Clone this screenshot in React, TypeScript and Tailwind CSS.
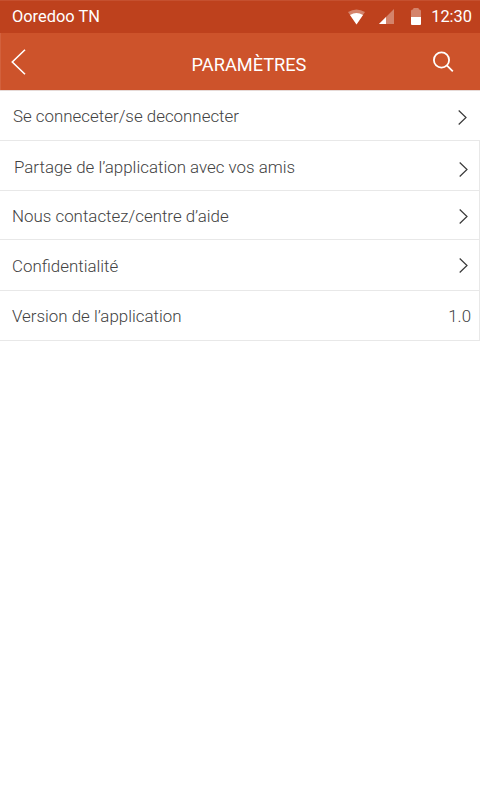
const rows = [
  { label: "Se conneceter/se deconnecter", box: "h-[50px] pl-[13px] pr-[13px]", text: "pt-[3px]", icon: "mt-[3px]" },
  { label: "Partage de l’application avec vos amis", box: "h-[50px] pl-[14px] pr-[11px] border-r", text: "pt-[5px]", icon: "mt-[7px]" },
  { label: "Nous contactez/centre d’aide", box: "h-[49px] pl-3 pr-[11px] border-r", text: "pt-[3px]", icon: "mt-[2px]" },
  { label: "Confidentialité", box: "h-[51px] pl-3 pr-[11px] border-r", text: "pt-[3px]", icon: "" },
  { label: "Version de l’application", value: "1.0", box: "h-[50px] pl-3 pr-2 border-r", text: "pt-[3px]", icon: "" },
];

export default function App() {
  return (
    <main className="flex h-[800px] w-[480px] flex-col bg-white font-['Roboto',sans-serif]">
      <div className="flex h-[33px] items-center justify-between border-t border-[#c5502f] bg-[#be411d] pr-2 pl-3 text-[16.4px] text-white">
        <span>Ooredoo TN</span>
        <div className="flex items-center">
          <svg className="mr-[14px]" width="17" height="16" viewBox="0 0 17 16">
            <path d="M0 3Q8.500 -2 17 3L8.500 15.500Z" fill="white" opacity=".35" />
            <path d="M2 6Q8.500 2 15 6L8.500 15.500Z" fill="white" />
          </svg>
          <svg className="mr-[17px]" width="15" height="15">
            <path d="M0 15L15 0V15Z" fill="white" opacity=".35" />
            <path d="M0 15L7 8V15Z" fill="white" />
          </svg>
          <svg className="mr-[10.500px]" width="10" height="17" viewBox="0 0 10 17">
            <path d="M0 9V3Q0 1.500 1.500 1.500H2Q2 0 3 0H7Q8 0 8 1.500H8.500Q10 1.500 10 3V9Z" fill="white" opacity=".35" />
            <path d="M0 9H10V16Q10 17 9 17H1Q0 17 0 16Z" fill="white" />
          </svg>
          <span>12:30</span>
        </div>
      </div>
      <header className="grid h-[57px] grid-cols-[60px_1fr_40px] items-center border-l border-[#d2613d] bg-[#cd532b] pr-[14px] pl-[10px] text-white">
        <svg className="mt-px" width="15" height="26" viewBox="0 0 15 26">
          <path d="M14 .7L1.300 13L14 25.300" fill="none" stroke="white" strokeWidth="1.600" />
        </svg>
        <span className="pt-[7px] pl-px text-center text-[18.200px]">PARAMÈTRES</span>
        <svg className="ml-[7px]" width="22" height="22" viewBox="0 0 22 22" fill="none" stroke="white" strokeWidth="1.800">
          <circle cx="8.500" cy="9" r="7.600" />
          <path d="M13.800 14.300L19.800 20.300" />
        </svg>
      </header>
      <div className="h-px shrink-0 bg-[#e6dad7]" />
      {rows.map((r) => (
        <div key={r.label} className={`flex items-center justify-between border-b border-[#e8e8e8] text-[16.9px] font-light text-[#424242] ${r.box}`}>
          <span className={r.text}>{r.label}</span>
          {r.value ? (
            <span className={r.text}>{r.value}</span>
          ) : (
            <svg className={r.icon} width="9" height="15" viewBox="0 0 9 15">
              <path d="M.7 .5L8 7.500L.7 14.500" fill="none" stroke="#3a3a3a" strokeWidth="1.200" />
            </svg>
          )}
        </div>
      ))}
    </main>
  );
}
